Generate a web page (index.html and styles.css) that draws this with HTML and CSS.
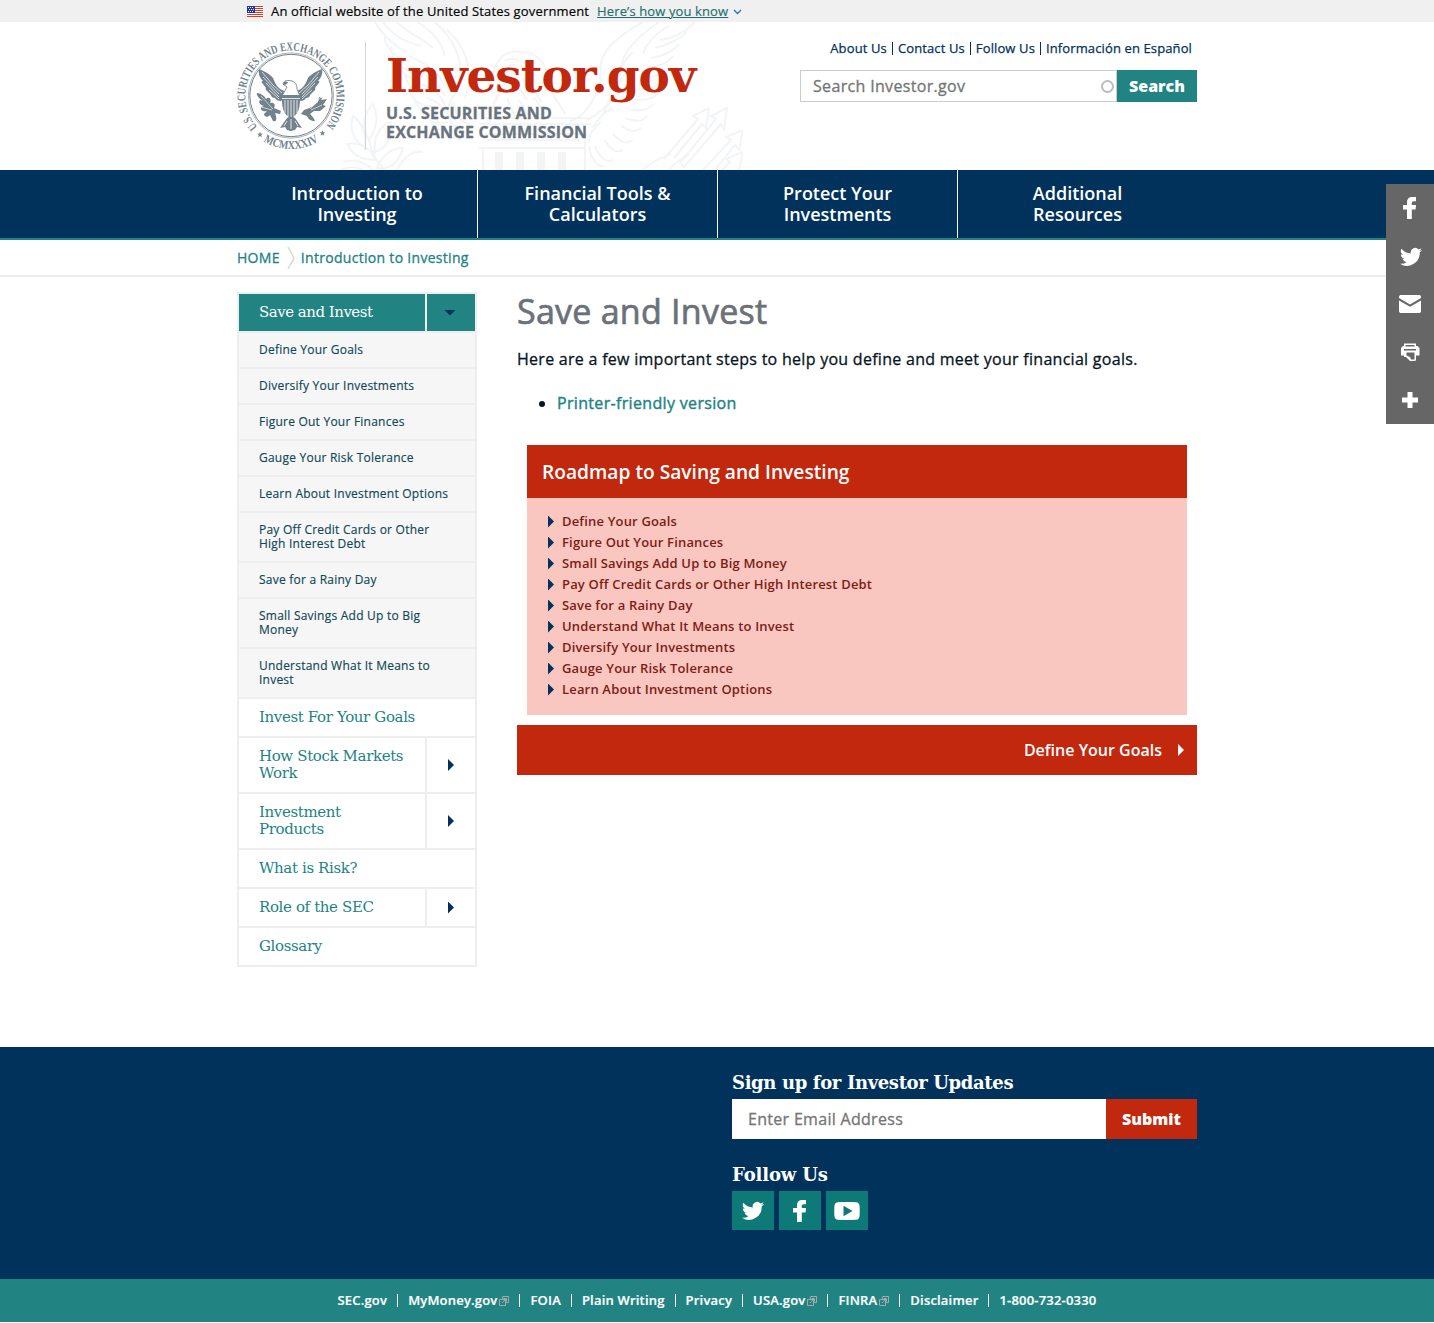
FILE: index.html
```html
<!DOCTYPE html>
<html lang="en">
<head>
<meta charset="utf-8">
<title>Save and Invest | Investor.gov</title>
<link rel="stylesheet" href="styles.css">
</head>
<body>
<svg class="sprite" aria-hidden="true">
  <symbol id="twitter" viewBox="0 0 24 24"><path d="M23 5.1a9 9 0 0 1-2.600.7 4.500 4.500 0 0 0 2-2.500 9 9 0 0 1-2.900 1.100 4.500 4.500 0 0 0-7.700 4.100A12.800 12.800 0 0 1 2.500 3.800a4.500 4.500 0 0 0 1.400 6 4.500 4.500 0 0 1-2-.6 4.500 4.500 0 0 0 3.600 4.500 4.500 4.500 0 0 1-2 .1 4.500 4.500 0 0 0 4.200 3.100A9 9 0 0 1 1 18.800 12.800 12.800 0 0 0 20.700 7.400 9 9 0 0 0 23 5.100z"/></symbol>
  <symbol id="facebook" viewBox="0 0 24 24"><path d="M9 23V13.500H5V9h4V6.500C9 2.800 11 1 14.300 1H18v4.200h-2.200c-1.600 0-2 .7-2 1.800v2H18l-.4 4.500h-3.800V23z"/></symbol>
  <symbol id="external" viewBox="0 0 10 10"><path d="M.5 3.500h6v6h-6zM3.500 3.500v-3h6v6h-3M3 7l4-4M4.500 2.500h3v3" fill="none" stroke="#9fa9aa"/></symbol>
  <symbol id="star" viewBox="0 0 10 10"><path d="M5 0l1.300 3.600H10L7 5.900 8.100 9.600 5 7.400 1.900 9.600 3 5.900 0 3.600h3.700z"/></symbol>
</svg>

<div class="gov-banner"><div class="wrap gov-inner">
  <svg class="flag" viewBox="0 0 16 11"><path fill="#fff" d="M0 0h16v11H0z"/><path stroke="#db3e1f" d="M0 .5h16M0 2.500h16M0 4.500h16M0 6.500h16M0 8.500h16M0 10.500h16"/><path fill="#1d33b1" d="M0 0h8v7H0z"/><path stroke="#fff" stroke-dasharray="1 1" d="M1 1.500h6M2 3.500h6M1 5.500h6"/></svg>
  <span>An official website of the United States government</span>
  <a href="#">Here’s how you know</a>
  <svg class="chev" viewBox="0 0 9 6"><path d="M1 1l3.500 3.500L8 1" fill="none" stroke="#2378b5" stroke-width="1.300"/></svg>
</div></div>

<header class="header"><div class="wrap header-inner">
  <svg class="eagle-bg" viewBox="0 0 420 148" fill="none" stroke="#f2f4f6" stroke-width="2">
    <path d="M52 0c6 12 18 22 30 30M60 0c10 14 22 20 38 24M74 0c14 14 26 16 36 26M94 0c14 8 24 18 28 34M62 12c-2 12 10 24 24 28M68 24c0 14 8 22 22 26M74 38c2 12 10 18 22 20M82 52c2 12 10 18 20 20M86 66c2 12 12 18 22 18M92 78c4 12 14 18 24 16M98 90c8 10 16 14 26 10M108 100c8 10 18 12 28 6"/>
    <path d="M112 0c18 16 30 38 24 64-6 14-16 18-8 38M124 8c22 20 26 44 18 68M86 34c12 6 28 12 36 30M92 48c12 4 24 12 30 26M98 62c10 4 20 10 24 22M104 76c8 2 16 8 20 16M112 92c4 12 12 22 26 26M122 88c4 12 12 20 20 22M130 80c2 12 8 20 16 22"/>
    <path d="M174 42c4-10 14-14 26-12 18 2 24 14 26 30 2 14 10 20 16 32M174 42c-4 4-4 10-4 16 4-6 8-8 14-8 4 10-8 20-14 34M182 39c4-3 10-3 14 0M186 43h6M186 52c-8 16-18 28-20 52M194 62l10 16M206 58l12 22M196 78l10 16M212 76l10 16M184 76l8 18"/>
    <path d="M320 0c-18 10-38 24-42 40-2 16 2 20-6 34-6 12-14 22-26 26M336 0c-14 10-34 24-38 44-2 24-10 42-34 54M346 4c-14 8-22 16-26 28M372 0c-10 10-20 16-36 18M364 10c-8 8-18 12-32 16M356 22c-6 8-16 12-28 14M350 34c-6 8-14 10-26 12M346 46c-8 8-14 8-26 10M340 58c-6 8-14 8-24 10M336 70c-6 8-14 8-24 8M330 82c-6 8-14 6-24 6M324 94c-6 8-14 4-22 2M318 106c-8 6-12 2-20-2M310 118c-8 6-14 0-20-6M300 128c-8 4-14-2-18-10M290 138c-8 4-14-4-18-14M280 144c-8 0-12-8-14-20M310 30c-8 6-12 16-14 26M304 50c-8 8-12 16-14 26M298 70c-10 4-14 14-18 22M290 86c-10 4-16 12-20 20M278 100c-8 6-12 12-12 20"/>
    <path d="M160 96h104M156 102h112M162 112h98M156 126h106M164 118h92M160 126v22M262 112v36"/>
    <path stroke-width="8" d="M176 130v18M197 130v18M218 130v18M239 130v18"/>
    <path d="M50 82c-10 10-12 22-4 36 8-12 10-24 4-36zM68 100c-12 4-18 16-16 30 12-4 18-16 16-30zM30 94c-4 12 0 24 12 32 2-14-2-24-12-32zM24 122c6 12 16 16 28 16-4-12-14-18-28-16zM20 140c12-4 22 0 30 8M80 126c-12 0-20 6-26 20 14 2 22-6 26-20zM46 118c2 12 8 22 16 30M100 130c-12-2-20 6-26 18M18 148c8-4 14-4 22 0"/>
    <path d="M404 86l-16 8 5 3-36 44 4 4 37-43 3 5 3-21zM386 86l-16 8 5 3-34 40M386 86l-3 20-4-4-28 34M420 108l-17 7 5 3-28 30M420 108l-4 20-4-5-20 25M348 132c-12 4-22 10-28 16M366 132c-10 6-16 10-20 16M420 130l-17 7 4 3-8 8M420 130l-4 18"/>
  </svg>
  <svg class="seal" viewBox="0 0 108 108" fill="#72828c">
    <defs><path id="topArc" d="M20.500 85A45.600 45.600 0 1 1 87.500 85"/><path id="botArc" d="M26.500 99.300A53 53 0 0 0 82.500 98.800"/></defs>
    <g fill="none" stroke="#72828c"><circle cx="54" cy="53.500" r="42.600" stroke-width=".6"/><circle cx="54" cy="53.500" r="41.200" stroke-width="1"/></g>
    <text class="seal-text"><textPath href="#topArc" textLength="209" lengthAdjust="spacingAndGlyphs">U.S. SECURITIES AND EXCHANGE COMMISSION</textPath></text>
    <text class="seal-text"><textPath href="#botArc" textLength="58" lengthAdjust="spacingAndGlyphs">MCMXXXIV</textPath></text>
    <use href="#star" x="20" y="89.500" width="6" height="6"/><use href="#star" x="82.500" y="88" width="6" height="6"/>
    <path d="M47 49C40 46 38 41 36 36 33 32 27 29 22 27c-1 5 1 9 4 12-2 0-2 1 0 3l3 4c-1 1 0 2 1 3l4 4c0 2 2 3 4 3 1 2 3 3 6 3l4-3zM60 49c7-3 9-8 11-13 3-4 9-7 14-9 1 5-1 9-4 12 2 0 2 1 0 3l-3 4c1 1 0 2-1 3l-4 4c0 2-2 3-4 3-1 2-3 3-6 3l-4-3z"/>
    <path stroke="#fff" stroke-width=".7" fill="none" d="M25 30l11 13 9 8M26 35l16 17M29 41l13 14M32 48l10 9M82 30L71 43l-9 8M81 35L65 52M78 41L65 55M75 48l-10 9"/>
    <path fill="#fff" stroke="#72828c" stroke-width=".9" d="M46 42c1-4 5-4 9-3 4 1 5 5 5 8l3 7H45l5-9z"/>
    <path d="M46 42c1-3 3-3 5-2l-1 2-3 1zM45 53h18v4H45zM45 57h18c0 10-2 16-9 19-7-3-9-9-9-19zM50 76l4-2 4 2 7 10-5-1-2 3-4 1-4-1-2-3-5 1z"/>
    <path stroke="#fff" stroke-width=".8" fill="none" d="M48 58v13M51 58v16M54 58v17M57 58v16M60 58v13M45 56.500h18M54 77v10M50 79l-3 5M58 79l3 5"/>
    <path d="M20 51c3 0 8 3 9 6 3-3 6 0 4 4 4-1 6 2 4 5l7 3-1 3-5-1c2 6 2 9-2 8l-3-6c-2 3-6 2-6-1l3-3c-4 1-7-1-6-4l3-1c-4-1-6-4-4-6l3 1c-5-3-7-7-6-8zM88 51l-4 7 6-1-4 6 3 1-6 5-6 0-4 3c2 2 4 4 5 7-4 0-7-2-8-5l-6-2 3-4 8-3 6-5 1-5 3 1z"/>
    <path stroke="#fff" stroke-width=".6" fill="none" d="M24 54l12 13M24 65l11 3M84 55l-11 12M85 63l-11 5"/>
  </svg>
  <div class="brand">
    <div class="brand-name">Investor.gov</div>
    <div class="brand-sub">U.S. SECURITIES AND<br>EXCHANGE COMMISSION</div>
  </div>
  <div class="header-tools">
    <nav class="top-links"><a href="#">About Us</a><a href="#">Contact Us</a><a href="#">Follow Us</a><a href="#">Información en Español</a></nav>
    <div class="search"><div class="search-input"><span>Search Investor.gov</span><i></i></div><div class="search-btn">Search</div></div>
  </div>
</div></header>

<nav class="main-nav"><div class="wrap nav-inner">
  <a href="#">Introduction to<br>Investing</a><a href="#">Financial Tools &amp;<br>Calculators</a><a href="#">Protect Your<br>Investments</a><a href="#">Additional<br>Resources</a>
</div></nav>

<div class="crumbs"><div class="wrap crumbs-inner">
  <a href="#">HOME</a><svg viewBox="0 0 8 22"><path d="M1 0l6 11-6 11" fill="none" stroke="#d8d8d8" stroke-width="1.500"/></svg><a href="#">Introduction to Investing</a>
</div></div>

<div class="wrap content">
  <aside class="side">
    <div class="item active"><a href="#">Save and Invest</a><b><i class="down"></i></b></div>
    <a class="sub" href="#">Define Your Goals</a>
    <a class="sub" href="#">Diversify Your Investments</a>
    <a class="sub" href="#">Figure Out Your Finances</a>
    <a class="sub" href="#">Gauge Your Risk Tolerance</a>
    <a class="sub" href="#">Learn About Investment Options</a>
    <a class="sub" href="#">Pay Off Credit Cards or Other<br>High Interest Debt</a>
    <a class="sub" href="#">Save for a Rainy Day</a>
    <a class="sub" href="#">Small Savings Add Up to Big<br>Money</a>
    <a class="sub" href="#">Understand What It Means to<br>Invest</a>
    <div class="item"><a href="#">Invest For Your Goals</a></div>
    <div class="item"><a href="#">How Stock Markets<br>Work</a><b><i class="arrow"></i></b></div>
    <div class="item"><a href="#">Investment<br>Products</a><b><i class="arrow"></i></b></div>
    <div class="item"><a href="#">What is Risk?</a></div>
    <div class="item"><a href="#">Role of the SEC</a><b><i class="arrow"></i></b></div>
    <div class="item"><a href="#">Glossary</a></div>
  </aside>
  <main class="main">
    <h1>Save and Invest</h1>
    <p>Here are a few important steps to help you define and meet your financial goals.</p>
    <ul class="links"><li><a href="#">Printer-friendly version</a></li></ul>
    <section class="roadmap">
      <h2>Roadmap to Saving and Investing</h2>
      <ul>
        <li><i class="arrow"></i>Define Your Goals</li>
        <li><i class="arrow"></i>Figure Out Your Finances</li>
        <li><i class="arrow"></i>Small Savings Add Up to Big Money</li>
        <li><i class="arrow"></i>Pay Off Credit Cards or Other High Interest Debt</li>
        <li><i class="arrow"></i>Save for a Rainy Day</li>
        <li><i class="arrow"></i>Understand What It Means to Invest</li>
        <li><i class="arrow"></i>Diversify Your Investments</li>
        <li><i class="arrow"></i>Gauge Your Risk Tolerance</li>
        <li><i class="arrow"></i>Learn About Investment Options</li>
      </ul>
    </section>
    <a class="next" href="#">Define Your Goals<i class="arrow"></i></a>
  </main>
</div>

<footer class="footer"><div class="wrap"><div class="signup">
  <h3 class="h-sign">Sign up for Investor Updates</h3>
  <div class="email"><div class="email-input">Enter Email Address</div><div class="email-btn">Submit</div></div>
  <h3 class="h-follow">Follow Us</h3>
  <div class="follow">
    <a href="#"><svg><use href="#twitter"/></svg></a>
    <a href="#"><svg><use href="#facebook"/></svg></a>
    <a href="#"><svg class="yt" viewBox="0 0 26 18"><path fill-rule="evenodd" d="M4 .3C10 0 16 0 22 .3c2.500.1 3.500 1.700 3.600 4 .2 3 .2 6.400 0 9.400-.1 2.300-1.100 3.900-3.600 4-6 .3-12 .3-18 0-2.500-.1-3.500-1.700-3.600-4-.2-3-.2-6.400 0-9.400C.5 2 1.500.4 4 .3zM9.500 3.700v10.600L18.500 9z"/></svg></a>
  </div>
</div></div></footer>
<div class="legal">
  <a href="#">SEC.gov</a><a href="#">MyMoney.gov<svg><use href="#external"/></svg></a><a href="#">FOIA</a><a href="#">Plain Writing</a><a href="#">Privacy</a><a href="#">USA.gov<svg><use href="#external"/></svg></a><a href="#">FINRA<svg><use href="#external"/></svg></a><a href="#">Disclaimer</a><a href="#">1-800-732-0330</a>
</div>

<div class="share">
  <a href="#"><svg><use href="#facebook"/></svg></a>
  <a href="#"><svg class="tw"><use href="#twitter"/></svg></a>
  <a href="#"><svg viewBox="0 0 24 24"><path d="M1 6V5c0-1.500 1-2 2-2h18c1 0 2 .5 2 2v1l-11 6.500zM1 8.500l11 6.300 11-6.300V19c0 1.500-1 2-2 2H3c-1 0-2-.5-2-2z"/></svg></a>
  <a href="#"><svg viewBox="0 0 24 24"><path fill-rule="evenodd" d="M6 3.500h12V6h1.500L21.500 8v7.500H18V20l-1 1h-5l-4-4H6v-1.500H3V8l2-2h1zM7.500 5v1.500h9V5zM6 9v1.500h12V9zM8.500 12.500v3l3.500 1.500 1 2.500h3.500v-7z"/></svg></a>
  <a href="#"><svg viewBox="0 0 24 24"><path d="M9.500 4h5v5.500H20v5h-5.500V20h-5v-5.500H4v-5h5.500z"/></svg></a>
</div>
</body>
</html>
```
FILE: styles.css
```css
* { box-sizing: border-box; }
body { margin: 0; background: #fff; font-family: "Open Sans", "Liberation Sans", sans-serif; color: #061524; position: relative; }
a { color: inherit; text-decoration: none; }
h1, h2, h3, p, ul { margin: 0; padding: 0; font-weight: 600; }
ul { list-style: none; }
.sprite { display: none; }
.wrap { width: 960px; margin: 0 auto; }

.gov-banner { background: #f0f0f0; height: 22px; }
.gov-inner { display: flex; align-items: center; height: 22px; padding-left: 10px; font-size: 13px; color: #000; letter-spacing: .155px; -webkit-text-stroke: .15px; }
.gov-inner a { color: #1f6f6f; text-decoration: underline; margin-left: 8px; letter-spacing: .12px; }
.flag { width: 16px; height: 11px; margin-right: 8px; }
.chev { width: 9px; height: 6px; margin-left: 5px; margin-top: 2px; }

.header { height: 148px; }
.header-inner { position: relative; display: flex; height: 148px; align-items: flex-start; }
.eagle-bg { position: absolute; left: 86px; top: 0; width: 420px; height: 148px; z-index: -1; }
.seal { width: 108px; height: 108px; margin-top: 20px; overflow: visible; }
.seal-text { font: bold 12px "Liberation Serif", serif; }
.brand { margin: 20px 0 0 20px; padding-left: 20px; border-left: 1px solid #d3d6d9; height: 108px; }
.brand-name { font: bold 47px/64px "DejaVu Serif", serif; letter-spacing: -1px; color: #c1280d; white-space: nowrap; margin-top: 2px; }
.brand-sub { font-weight: 700; font-size: 16px; line-height: 19px; color: #69737e; margin-top: -4px; white-space: nowrap; letter-spacing: .18px; -webkit-text-stroke: .3px; }
.header-tools { margin-left: auto; width: 397px; padding-top: 20px; }
.top-links { display: flex; justify-content: flex-end; font-size: 13px; line-height: 13px; color: #00325b; letter-spacing: .12px; -webkit-text-stroke: .25px; }
.top-links a { padding: 0 5px; }
.top-links a + a { border-left: 1px solid #00325b; }
.search { display: flex; margin-top: 15px; height: 32px; font-size: 16px; }
.search-input { flex: 1; display: flex; align-items: center; justify-content: space-between; border: 1px solid #ccc; padding: 0 2px 0 12px; color: #757575; letter-spacing: .33px; -webkit-text-stroke: .3px; }
.search-input i { width: 13px; height: 13px; border: 2px solid #bbb; border-radius: 50%; }
.search-btn { width: 80px; background: #228383; color: #fff; font-weight: 800; line-height: 32px; text-align: center; }

.main-nav { background: #00325b; border-bottom: 2px solid #228383; height: 70px; }
.nav-inner { display: grid; grid-template-columns: 241px 240px 240px 239px; }
.nav-inner a { height: 68px; padding-top: 13px; text-align: center; color: #fff; font-size: 18px; line-height: 21px; font-weight: 600; }
.nav-inner a:not(:last-child) { border-right: 1px solid #fff; }

.crumbs { height: 37px; border-bottom: 2px solid #ececec; }
.crumbs-inner { display: flex; align-items: center; height: 35px; font-size: 14px; color: #228383; letter-spacing: .3px; -webkit-text-stroke: .3px; }
.crumbs a { margin-top: -1px; }
.crumbs svg { width: 8px; height: 22px; margin: 1px 6px 0 7px; }

.content { display: flex; gap: 40px; align-items: flex-start; height: 770px; padding-top: 15px; }
.side { width: 240px; border: solid #eee; border-width: 0 2px 2px; }
.item { display: flex; border-top: 2px solid #eee; font: 15px/17px "DejaVu Serif", serif; letter-spacing: -.37px; color: #228383; }
.item a { flex: 1; padding: 10px 0 10px 20px; white-space: nowrap; }
.item b { width: 50px; border-left: 2px solid #eee; display: grid; place-items: center; }
.active a, .active b { background: #228383; color: #fff; }
.active { letter-spacing: -.5px; }
.arrow { width: 6px; height: 12px; background: #00325b; clip-path: polygon(0 0, 100% 50%, 0 100%); }
.down { width: 12px; height: 6px; margin-right: 2px; background: #00325b; clip-path: polygon(0 0, 100% 0, 50% 100%); }
.sub { display: block; border-top: 2px solid #eee; background: #f6f6f6; padding: 10px 0 10px 20px; font-size: 12px; line-height: 14px; color: #0f4757; white-space: nowrap; letter-spacing: .23px; -webkit-text-stroke: .15px; }

.main { width: 680px; }
h1 { font-size: 34px; line-height: 40px; font-weight: 400; color: #6b7178; margin-top: -1px; letter-spacing: .25px; -webkit-text-stroke: .7px; }
.main p { font-size: 16px; line-height: 24px; font-weight: 400; margin-top: 16px; white-space: nowrap; letter-spacing: .28px; -webkit-text-stroke: .3px; }
.links { list-style: disc; padding-left: 40px; margin-top: 20px; font-size: 16px; line-height: 24px; }
.links a { color: #228383; font-weight: 400; letter-spacing: .33px; -webkit-text-stroke: .4px; }
.roadmap { margin: 30px 10px 10px; background: #f9c7c0; height: 270px; }
.roadmap h2 { background: #c1280d; color: #fff; height: 53px; line-height: 53px; padding-left: 15px; font-size: 19.2px; font-weight: 600; }
.roadmap ul { padding: 13px 0 0 21px; }
.roadmap li { display: flex; align-items: center; gap: 8px; height: 21px; padding-bottom: 2px; font-size: 13px; font-weight: 600; color: #7d1c16; letter-spacing: .17px; }
.roadmap .arrow { margin-top: 2px; }
.next { display: flex; align-items: center; justify-content: flex-end; gap: 16px; height: 50px; padding-right: 13px; background: #c1280d; color: #fff; font-size: 16px; font-weight: 600; }
.next .arrow { background: #fff; }

.footer { height: 232px; background: #00325b; padding-top: 25px; }
.signup { margin-left: 495px; width: 465px; color: #fff; }
.signup h3 { font: bold 18px/22px "DejaVu Serif", serif; white-space: nowrap; }
.h-sign { letter-spacing: -.36px; }
.h-follow { letter-spacing: -.15px; }
.email { display: flex; height: 40px; margin: 5px 0 25px; line-height: 40px; font-size: 16px; }
.email-input { flex: 1; background: #fff; color: #757575; padding-left: 16px; letter-spacing: .3px; -webkit-text-stroke: .3px; }
.email-btn { width: 91px; background: #c1280d; text-align: center; font-weight: 800; }
.follow { display: flex; gap: 5px; margin-top: 5px; }
.follow a { width: 42px; height: 39px; background: #0e7a78; display: grid; place-items: center; }
.follow svg { width: 24px; height: 24px; fill: #fff; }
.follow .yt { width: 26px; height: 18px; }

.legal { height: 43px; background: #228383; color: #fff; display: flex; justify-content: center; align-items: center; font-size: 13px; font-weight: 600; line-height: 13px; letter-spacing: .19px; -webkit-text-stroke: .2px; }
.legal a { padding: 0 10px; display: flex; align-items: center; white-space: nowrap; }
.legal a + a { border-left: 1px solid #fff; }
.legal svg { width: 10px; height: 10px; margin-left: 2px; }

.share { position: absolute; right: 0; top: 184px; width: 48px; background: #666; }
.share a { display: grid; place-items: center; height: 48px; }
.share svg { width: 24px; height: 24px; fill: #fff; }
.share .tw { margin: 2px 0 0 2px; }
```
